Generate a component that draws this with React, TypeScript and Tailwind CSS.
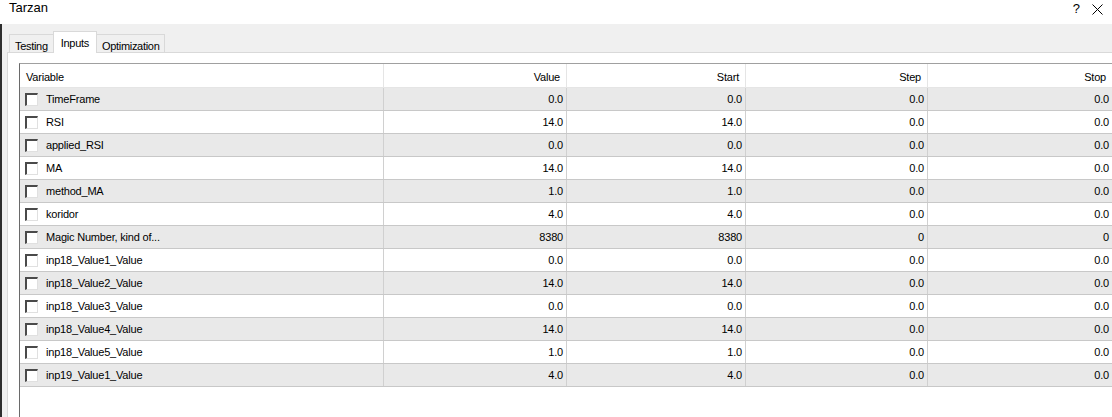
import React from "react";

type Input = { name: string; value: string; start: string; step: string; stop: string };

const inputs: Input[] = [
  { name: "TimeFrame", value: "0.0", start: "0.0", step: "0.0", stop: "0.0" },
  { name: "RSI", value: "14.0", start: "14.0", step: "0.0", stop: "0.0" },
  { name: "applied_RSI", value: "0.0", start: "0.0", step: "0.0", stop: "0.0" },
  { name: "MA", value: "14.0", start: "14.0", step: "0.0", stop: "0.0" },
  { name: "method_MA", value: "1.0", start: "1.0", step: "0.0", stop: "0.0" },
  { name: "koridor", value: "4.0", start: "4.0", step: "0.0", stop: "0.0" },
  { name: "Magic Number, kind of...", value: "8380", start: "8380", step: "0", stop: "0" },
  { name: "inp18_Value1_Value", value: "0.0", start: "0.0", step: "0.0", stop: "0.0" },
  { name: "inp18_Value2_Value", value: "14.0", start: "14.0", step: "0.0", stop: "0.0" },
  { name: "inp18_Value3_Value", value: "0.0", start: "0.0", step: "0.0", stop: "0.0" },
  { name: "inp18_Value4_Value", value: "14.0", start: "14.0", step: "0.0", stop: "0.0" },
  { name: "inp18_Value5_Value", value: "1.0", start: "1.0", step: "0.0", stop: "0.0" },
  { name: "inp19_Value1_Value", value: "4.0", start: "4.0", step: "0.0", stop: "0.0" },
];

const tabs = ["Testing", "Inputs", "Optimization"];

function Checkbox() {
  return (
    <div className="w-[13px] h-[13px] bg-white border-t-2 border-l-2 border-b border-r border-t-[#4a4a4a] border-l-[#4a4a4a] border-b-[#e0e0e0] border-r-[#e0e0e0]" />
  );
}

function Cell({ children, className = "" }: { children: React.ReactNode; className?: string }) {
  return <div className={`flex items-center justify-end pr-[3px] border-r border-[#d0d0d0] ${className}`}>{children}</div>;
}

export default function App() {
  return (
    <div className="w-[1112px] h-[417px] overflow-hidden bg-[#f0f0f0] text-black flex flex-col font-['Liberation_Sans',Arial,sans-serif]">
      {/* title bar */}
      <div className="h-[24px] bg-white flex items-start justify-between pl-[9px] pr-[9px] shrink-0">
        <span className="text-[13px] leading-[16px]">Tarzan</span>
        <div className="flex items-start gap-[12px] pt-[2px]">
          <span className="text-[13px] leading-[14px]">?</span>
          <svg width="11" height="11" viewBox="0 0 11 11" className="mt-[2px]">
            <path d="M0.5 0.5 L10.5 10.5 M10.5 0.5 L0.5 10.5" stroke="#000" strokeWidth="1" />
          </svg>
        </div>
      </div>

      <div className="flex flex-1 min-h-0">
        <div className="w-[2px] bg-[#2e2e2e] shrink-0" />
        <div className="flex-1 flex flex-col pl-[5px] min-w-0">
          {/* tab strip */}
          <div className="h-[28px] flex items-end pl-[2px] shrink-0 text-[11px] tracking-[-0.3px]">
            {tabs.map((t) =>
              t === "Inputs" ? (
                <div
                  key={t}
                  className="h-[22px] -mb-px -mx-[1px] px-[7px] pt-[3px] bg-white border border-b-0 border-[#d9d9d9] relative z-10"
                >
                  {t}
                </div>
              ) : (
                <div
                  key={t}
                  className="h-[18px] px-[5px] pt-[3px] bg-[#f0f0f0] border border-b-0 border-[#d9d9d9]"
                >
                  {t}
                </div>
              )
            )}
          </div>

          {/* tab page */}
          <div className="flex-1 bg-white border-t border-l border-[#d9d9d9] pl-[11px] pt-[10px] min-h-0">
            <div className="h-full border-t border-l border-t-[#a0a0a0] border-l-[#6a6a6a] text-[11px] tracking-[-0.2px]">
              {/* header */}
              <div className="grid grid-cols-[364px_183px_179px_182px_1fr] h-[24px] bg-white border-b border-[#e5e5e5]">
                <div className="flex items-center pt-[3px] pl-[6px] border-r border-[#e5e5e5]">Variable</div>
                <div className="flex items-center pt-[3px] justify-end pr-[6px] border-r border-[#e5e5e5]">Value</div>
                <div className="flex items-center pt-[3px] justify-end pr-[6px] border-r border-[#e5e5e5]">Start</div>
                <div className="flex items-center pt-[3px] justify-end pr-[6px] border-r border-[#e5e5e5]">Step</div>
                <div className="flex items-center pt-[3px] justify-end pr-[6px]">Stop</div>
              </div>

              {inputs.map((row, i) => (
                <div
                  key={row.name}
                  className={`grid grid-cols-[364px_183px_179px_182px_1fr] h-[23px] border-b border-[#c8c8c8] ${
                    i % 2 === 0 ? "bg-[#e9e9e9]" : "bg-white"
                  }`}
                >
                  <div className="flex items-center gap-[8px] pl-[5px] border-r border-[#d0d0d0]">
                    <Checkbox />
                    <span>{row.name}</span>
                  </div>
                  <Cell>{row.value}</Cell>
                  <Cell>{row.start}</Cell>
                  <Cell>{row.step}</Cell>
                  <div className="flex items-center justify-end pr-[3px]">{row.stop}</div>
                </div>
              ))}
            </div>
          </div>
        </div>
      </div>
    </div>
  );
}
